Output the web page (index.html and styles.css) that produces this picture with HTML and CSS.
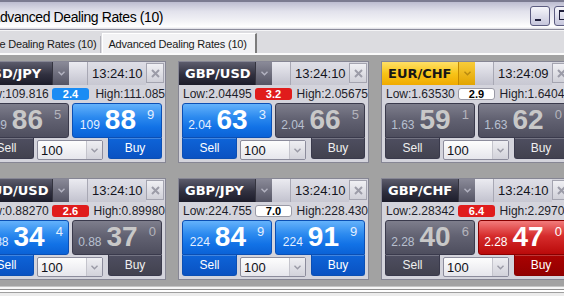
FILE: index.html
```html
<!DOCTYPE html>
<html lang="en">
<head>
    <meta charset="UTF-8">
    <title>Advanced Dealing Rates</title>
    <link rel="stylesheet" href="styles.css">
</head>
<body>
    <div class="window">
        <div class="titlebar">
            <span class="title">Advanced Dealing Rates (10)</span>
            <div class="win-btns">
                <div class="win-btn min"><span></span></div>
                <div class="win-btn max"><span></span></div>
            </div>
        </div>

        <div class="tabs">
            <div class="tab tab-off">Simple Dealing Rates (10)</div>
            <div class="tab tab-on">Advanced Dealing Rates (10)</div>
        </div>

        <div class="board">
            <!-- USD/JPY -->
            <div class="card">
                <div class="card-head">
                    <div class="pair">USD/JPY</div>
                    <div class="pair-drop"><svg width="7" height="5" viewBox="0 0 7 5"><path d="M0.5 0.8 L3.5 3.8 L6.5 0.8" fill="none" stroke="#b4b4c2" stroke-width="1.4"/></svg></div>
                    <div class="head-gap"></div>
                    <div class="time">13:24:10</div>
                    <div class="close"><svg width="9" height="9" viewBox="0 0 9 9"><path d="M1 1 L8 8 M8 1 L1 8" stroke="#9c9ca8" stroke-width="2"/></svg></div>
                </div>
                <div class="info">
                    <span class="low">Low:109.816</span>
                    <span class="badge blue">2.4</span>
                    <span class="high">High:111.085</span>
                </div>
                <div class="deal">
                    <div class="quote sell grey"><span class="small">109</span><span class="big">86</span><span class="sup">5</span></div>
                    <div class="quote buy blue"><span class="small">109</span><span class="big">88</span><span class="sup">9</span></div>
                    <div class="act sell grey">Sell</div>
                    <div class="amount"><span class="qty">100</span><span class="arrow"><svg width="7" height="5" viewBox="0 0 7 5"><path d="M0.5 0.8 L3.5 3.8 L6.5 0.8" fill="none" stroke="#9a9aa6" stroke-width="1.4"/></svg></span></div>
                    <div class="act buy blue">Buy</div>
                </div>
            </div>

            <!-- GBP/USD -->
            <div class="card">
                <div class="card-head">
                    <div class="pair">GBP/USD</div>
                    <div class="pair-drop"><svg width="7" height="5" viewBox="0 0 7 5"><path d="M0.5 0.8 L3.5 3.8 L6.5 0.8" fill="none" stroke="#b4b4c2" stroke-width="1.4"/></svg></div>
                    <div class="head-gap"></div>
                    <div class="time">13:24:10</div>
                    <div class="close"><svg width="9" height="9" viewBox="0 0 9 9"><path d="M1 1 L8 8 M8 1 L1 8" stroke="#9c9ca8" stroke-width="2"/></svg></div>
                </div>
                <div class="info">
                    <span class="low">Low:2.04495</span>
                    <span class="badge red">3.2</span>
                    <span class="high">High:2.05675</span>
                </div>
                <div class="deal">
                    <div class="quote sell blue"><span class="small">2.04</span><span class="big">63</span><span class="sup">3</span></div>
                    <div class="quote buy grey"><span class="small">2.04</span><span class="big">66</span><span class="sup">5</span></div>
                    <div class="act sell blue">Sell</div>
                    <div class="amount"><span class="qty">100</span><span class="arrow"><svg width="7" height="5" viewBox="0 0 7 5"><path d="M0.5 0.8 L3.5 3.8 L6.5 0.8" fill="none" stroke="#9a9aa6" stroke-width="1.4"/></svg></span></div>
                    <div class="act buy grey">Buy</div>
                </div>
            </div>

            <!-- EUR/CHF -->
            <div class="card">
                <div class="card-head">
                    <div class="pair yellow">EUR/CHF</div>
                    <div class="pair-drop yellow"><svg width="7" height="5" viewBox="0 0 7 5"><path d="M0.5 0.8 L3.5 3.8 L6.5 0.8" fill="none" stroke="#b88a10" stroke-width="1.4"/></svg></div>
                    <div class="head-gap"></div>
                    <div class="time">13:24:09</div>
                    <div class="close"><svg width="9" height="9" viewBox="0 0 9 9"><path d="M1 1 L8 8 M8 1 L1 8" stroke="#9c9ca8" stroke-width="2"/></svg></div>
                </div>
                <div class="info">
                    <span class="low">Low:1.63530</span>
                    <span class="badge white">2.9</span>
                    <span class="high">High:1.64040</span>
                </div>
                <div class="deal">
                    <div class="quote sell grey"><span class="small">1.63</span><span class="big">59</span><span class="sup">1</span></div>
                    <div class="quote buy grey"><span class="small">1.63</span><span class="big">62</span><span class="sup">0</span></div>
                    <div class="act sell grey">Sell</div>
                    <div class="amount"><span class="qty">100</span><span class="arrow"><svg width="7" height="5" viewBox="0 0 7 5"><path d="M0.5 0.8 L3.5 3.8 L6.5 0.8" fill="none" stroke="#9a9aa6" stroke-width="1.4"/></svg></span></div>
                    <div class="act buy grey">Buy</div>
                </div>
            </div>

            <!-- AUD/USD -->
            <div class="card">
                <div class="card-head">
                    <div class="pair">AUD/USD</div>
                    <div class="pair-drop"><svg width="7" height="5" viewBox="0 0 7 5"><path d="M0.5 0.8 L3.5 3.8 L6.5 0.8" fill="none" stroke="#b4b4c2" stroke-width="1.4"/></svg></div>
                    <div class="head-gap"></div>
                    <div class="time">13:24:10</div>
                    <div class="close"><svg width="9" height="9" viewBox="0 0 9 9"><path d="M1 1 L8 8 M8 1 L1 8" stroke="#9c9ca8" stroke-width="2"/></svg></div>
                </div>
                <div class="info">
                    <span class="low">Low:0.88270</span>
                    <span class="badge red">2.6</span>
                    <span class="high">High:0.89980</span>
                </div>
                <div class="deal">
                    <div class="quote sell blue"><span class="small">0.88</span><span class="big">34</span><span class="sup">4</span></div>
                    <div class="quote buy grey"><span class="small">0.88</span><span class="big">37</span><span class="sup">0</span></div>
                    <div class="act sell blue">Sell</div>
                    <div class="amount"><span class="qty">100</span><span class="arrow"><svg width="7" height="5" viewBox="0 0 7 5"><path d="M0.5 0.8 L3.5 3.8 L6.5 0.8" fill="none" stroke="#9a9aa6" stroke-width="1.4"/></svg></span></div>
                    <div class="act buy grey">Buy</div>
                </div>
            </div>

            <!-- GBP/JPY -->
            <div class="card">
                <div class="card-head">
                    <div class="pair">GBP/JPY</div>
                    <div class="pair-drop"><svg width="7" height="5" viewBox="0 0 7 5"><path d="M0.5 0.8 L3.5 3.8 L6.5 0.8" fill="none" stroke="#b4b4c2" stroke-width="1.4"/></svg></div>
                    <div class="head-gap"></div>
                    <div class="time">13:24:10</div>
                    <div class="close"><svg width="9" height="9" viewBox="0 0 9 9"><path d="M1 1 L8 8 M8 1 L1 8" stroke="#9c9ca8" stroke-width="2"/></svg></div>
                </div>
                <div class="info">
                    <span class="low">Low:224.755</span>
                    <span class="badge white">7.0</span>
                    <span class="high">High:228.430</span>
                </div>
                <div class="deal">
                    <div class="quote sell blue"><span class="small">224</span><span class="big">84</span><span class="sup">9</span></div>
                    <div class="quote buy blue"><span class="small">224</span><span class="big">91</span><span class="sup">9</span></div>
                    <div class="act sell blue">Sell</div>
                    <div class="amount"><span class="qty">100</span><span class="arrow"><svg width="7" height="5" viewBox="0 0 7 5"><path d="M0.5 0.8 L3.5 3.8 L6.5 0.8" fill="none" stroke="#9a9aa6" stroke-width="1.4"/></svg></span></div>
                    <div class="act buy blue">Buy</div>
                </div>
            </div>

            <!-- GBP/CHF -->
            <div class="card">
                <div class="card-head">
                    <div class="pair">GBP/CHF</div>
                    <div class="pair-drop"><svg width="7" height="5" viewBox="0 0 7 5"><path d="M0.5 0.8 L3.5 3.8 L6.5 0.8" fill="none" stroke="#b4b4c2" stroke-width="1.4"/></svg></div>
                    <div class="head-gap"></div>
                    <div class="time">13:24:10</div>
                    <div class="close"><svg width="9" height="9" viewBox="0 0 9 9"><path d="M1 1 L8 8 M8 1 L1 8" stroke="#9c9ca8" stroke-width="2"/></svg></div>
                </div>
                <div class="info">
                    <span class="low">Low:2.28342</span>
                    <span class="badge red">6.4</span>
                    <span class="high">High:2.29700</span>
                </div>
                <div class="deal">
                    <div class="quote sell grey"><span class="small">2.28</span><span class="big">40</span><span class="sup">6</span></div>
                    <div class="quote buy red"><span class="small">2.28</span><span class="big">47</span><span class="sup">0</span></div>
                    <div class="act sell grey">Sell</div>
                    <div class="amount"><span class="qty">100</span><span class="arrow"><svg width="7" height="5" viewBox="0 0 7 5"><path d="M0.5 0.8 L3.5 3.8 L6.5 0.8" fill="none" stroke="#9a9aa6" stroke-width="1.4"/></svg></span></div>
                    <div class="act buy red">Buy</div>
                </div>
            </div>
        </div>

        <div class="frame-bottom"></div>
    </div>
</body>
</html>
```

FILE: styles.css
```css
body {
    margin: 0;
    width: 564px;
    height: 296px;
    overflow: hidden;
    font-family: "Liberation Sans", Arial, sans-serif;
    background-color: #a2a2a2;
    color: #1e1e28;
}

/* Window title bar */
.titlebar {
    display: flex;
    align-items: center;
    justify-content: space-between;
    height: 27px;
    border-top: 2px solid #7a7a90;
    border-bottom: 1px solid #8c8c9c;
    background: linear-gradient(#bcbcd0, #e2e2ec 35%, #f2f2f6 70%, #ffffff 92%, #dadae2);
}

.title {
    margin-left: -9px;
    padding-top: 2px;
    font-size: 14px;
    letter-spacing: -0.4px;
    color: #000;
}

.win-btns {
    display: flex;
    gap: 4px;
    margin-right: -10px;
}

.win-btn {
    width: 20px;
    height: 20px;
    box-sizing: border-box;
    border: 1px solid #5c5c80;
    border-radius: 3px;
    background: linear-gradient(#f6f6fb, #c6c6dc);
    display: flex;
}

.win-btn.min {
    align-items: flex-end;
    padding: 0 0 4px 4px;
}

.win-btn.min span {
    width: 6px;
    height: 2px;
    background-color: #20203c;
}

.win-btn.max {
    padding: 3px 0 0 4px;
}

.win-btn.max span {
    width: 8px;
    height: 7px;
    border: 1px solid #20203c;
    border-top-width: 2px;
}

/* Tabs */
.tabs {
    display: flex;
    align-items: flex-end;
    height: 22px;
    border-top: 1px solid #f4f4f6;
    border-bottom: 2px solid #fbfbfb;
    background-color: #dcdce0;
}

.tab {
    font-size: 11px;
    letter-spacing: -0.2px;
    color: #1a1a1a;
    white-space: nowrap;
    box-sizing: border-box;
}

.tab-off {
    margin-left: -32px;
    height: 17px;
    padding: 2px 4px 0 5px;
    border-right: 1px solid #b4b4bc;
}

.tab-off + .tab-on {
    margin-left: 1px;
}

.tab-on {
    height: 20px;
    padding: 4px 8px 0 5px;
    background-color: #f2f2f4;
    border-top: 1px solid #ffffff;
    border-left: 1px solid #ffffff;
    border-right: 2px solid #7c7c7c;
}

/* Board of dealing cards */
.board {
    display: grid;
    grid-template-columns: repeat(3, 191px);
    grid-auto-rows: 102px;
    column-gap: 12px;
    row-gap: 15px;
    height: 231px;
    box-sizing: border-box;
    padding-top: 6px;
    margin-left: -25px;
}

.card {
    display: flex;
    flex-direction: column;
    border: 1px solid #868694;
    background-color: #d4d4dc;
}

.card-head {
    display: flex;
    height: 23px;
}

.pair {
    width: 76px;
    box-sizing: border-box;
    padding-left: 6px;
    display: flex;
    align-items: center;
    font-family: "DejaVu Sans", Verdana, sans-serif;
    font-weight: bold;
    font-size: 13px;
    color: #ffffff;
    background: linear-gradient(#5c5c6c, #30303f 55%, #1c1c2a);
    white-space: nowrap;
}

.pair.yellow {
    color: #161616;
    background: linear-gradient(#ffe066, #f8c418 50%, #f0aa00);
}

.pair-drop {
    width: 17px;
    display: flex;
    align-items: center;
    justify-content: center;
    background: linear-gradient(#8a8a98, #545464);
    border-left: 1px solid #34343f;
    box-sizing: border-box;
}

.pair-drop.yellow {
    background: linear-gradient(#f8cc3a, #e2a400);
    border-left-color: #c48a00;
}

.head-gap {
    width: 18px;
    background: linear-gradient(#ebebf1, #c2c2ce);
    border-right: 1px solid #a8a8b4;
}

.time {
    flex: 1;
    display: flex;
    align-items: center;
    padding-left: 4px;
    font-size: 13px;
    color: #141420;
    background: linear-gradient(#dedee6, #c8c8d2);
}

.close {
    width: 16px;
    margin: 1px 1px 2px 0;
    display: flex;
    align-items: center;
    justify-content: center;
    border: 1px solid #a4a4b0;
    background: linear-gradient(#f0f0f4, #d0d0d8);
}

/* Low / spread / high */
.info {
    display: grid;
    grid-template-columns: minmax(0, 1fr) 37px minmax(0, 1fr);
    align-items: center;
    height: 17px;
    font-size: 12px;
    color: #1e1e2a;
    white-space: nowrap;
}

.low {
    padding-left: 4px;
}

.high {
    text-align: right;
}

.badge {
    height: 12px;
    line-height: 12px;
    border-radius: 3px;
    text-align: center;
    font-weight: bold;
    font-size: 11px;
    color: #ffffff;
    box-sizing: border-box;
}

.badge.red {
    background-color: #e01c1c;
}

.badge.blue {
    background-color: #1a8cf4;
}

.badge.white {
    line-height: 10px;
    color: #000;
    background-color: #ffffff;
    border: 1px solid #9a9aa6;
}

/* Sell / Buy buttons */
.deal {
    display: grid;
    grid-template-columns: 55px 35px 3px 36px 54px;
    grid-template-rows: 35px 21px;
    margin: 1px 3px 0;
}

.quote {
    grid-row: 1;
    display: flex;
    align-items: baseline;
    justify-content: center;
    box-sizing: border-box;
    padding-top: 2px;
    border: 1px solid;
    white-space: nowrap;
}

.quote.sell {
    grid-column: 1 / 3;
    border-radius: 3px 3px 3px 0;
}

.quote.buy {
    grid-column: 4 / 6;
    border-radius: 3px 3px 0 3px;
}

.small {
    font-size: 12px;
    margin-right: 5px;
}

.big {
    font-weight: bold;
    font-size: 28px;
    line-height: 1;
}

.sup {
    align-self: flex-start;
    margin-top: 2px;
    margin-left: 11px;
    font-size: 13px;
    line-height: 1;
}

.act {
    grid-row: 2;
    display: flex;
    align-items: center;
    justify-content: center;
    font-size: 12px;
    color: #ffffff;
    border: 1px solid;
    border-top: none;
    border-radius: 0 0 3px 3px;
    box-shadow: inset 0 1px rgba(255, 255, 255, 0.22);
}

.act.sell {
    grid-column: 1;
}

.act.buy {
    grid-column: 5;
}

.blue {
    color: #ffffff;
    border-color: #0b4fb4;
}

.quote.blue {
    background: linear-gradient(#64b2fb, #2c8aef 40%, #1272e6 70%, #0b62d6);
}

.quote.blue .small,
.quote.blue .sup {
    color: #e4efff;
}

.act.blue {
    background: linear-gradient(#0e64d8, #0a52c2);
}

.grey {
    color: #c8c8c8;
    border-color: #3a3a4c;
}

.quote.grey {
    background: linear-gradient(#7e7e8c, #626272 45%, #4e4e5e);
}

.quote.grey .small {
    color: #b8c0d0;
}

.quote.grey .sup {
    color: #b4b4bc;
}

.act.grey {
    color: #f0f0f0;
    background: linear-gradient(#4e4e60, #42424f);
}

.red {
    color: #ffffff;
    border-color: #880000;
}

.quote.red {
    background: linear-gradient(#f27c7c, #d62c2c 45%, #ba0a0a);
}

.act.red {
    background: linear-gradient(#aa0202, #920000);
}

/* Amount drop-down in the notch */
.amount {
    grid-row: 2;
    grid-column: 2 / 5;
    margin: 2px 5px -1px 3px;
    display: flex;
    border: 1px solid #8c8c9c;
    border-radius: 2px;
    background: linear-gradient(#fdfdfd, #e6e6ec);
}

.qty {
    flex: 1;
    display: flex;
    align-items: center;
    padding-left: 3px;
    font-size: 13px;
    color: #101018;
}

.arrow {
    width: 15px;
    display: flex;
    align-items: center;
    justify-content: center;
    border-left: 1px solid #c4c4cc;
    background: linear-gradient(#eeeef2, #d2d2da);
}

/* Bottom frame edge */
.frame-bottom {
    height: 10px;
    background: linear-gradient(#c4c4c4 0, #c4c4c4 1px, #f6f6f6 1px, #f6f6f6 3px, #8e8e8e 3px, #8e8e8e 4px, #ffffff 4px, #ffffff 6px, #a0a0a0 6px, #a0a0a0 7px, #ececec 7px);
}
```
